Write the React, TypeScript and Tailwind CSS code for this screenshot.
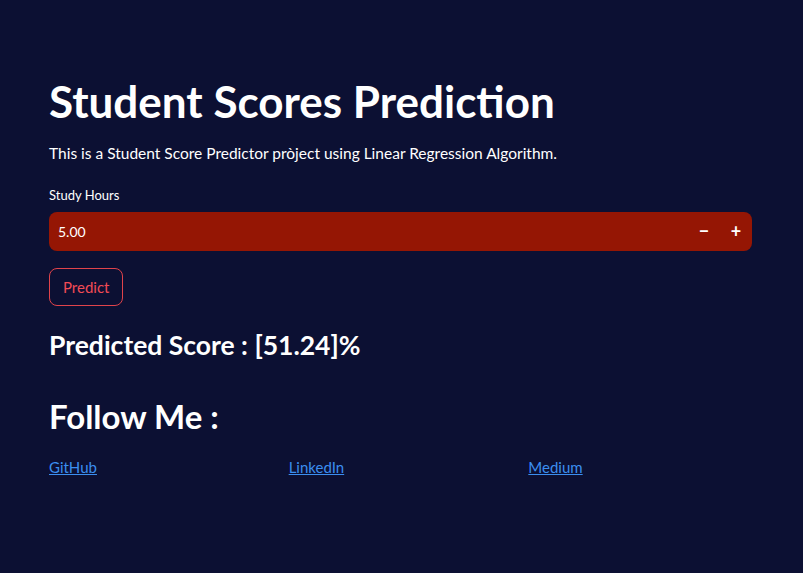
import { useState } from "react";

const FONT = { fontFamily: 'Lato, "Noto Sans", "Liberation Sans", sans-serif' };

export default function App() {
  const [hours, setHours] = useState(5);
  const [score] = useState("51.24");

  return (
    <div className="min-h-screen w-full bg-[#0c1033] text-white" style={FONT}>
      <div className="ml-[49px] w-[703px] pt-[75px] pb-10">
        <h1 className="text-[44px] font-bold leading-[1.2]">Student Scores Prediction</h1>
        <p className="mt-[13px] text-[15.5px] leading-6">
          This is a Student Score Predictor pròject using Linear Regression Algorithm.
        </p>

        <label className="mt-[20px] block text-[13px] leading-5">Study Hours</label>
        <div className="mt-[7px] flex h-[39px] items-center rounded-lg bg-[#951604] pl-[9px]">
          <span className="flex-1 text-[14px]">{hours.toFixed(2)}</span>
          <button
            type="button"
            onClick={() => setHours((h) => Math.max(0, h - 0.01))}
            className="flex h-[32px] w-[32px] items-center justify-center text-[18px] font-bold"
          >
            −
          </button>
          <button
            type="button"
            onClick={() => setHours((h) => h + 0.01)}
            className="flex h-[32px] w-[32px] items-center justify-center text-[18px] font-bold"
          >
            +
          </button>
        </div>

        <button
          type="button"
          className="mt-[17px] h-[38px] rounded-lg border border-[#e0434b] px-[13px] text-[15px] text-[#f24b55]"
        >
          Predict
        </button>

        <h3 className="mt-[21px] text-[26.5px] font-bold leading-[1.4]">Predicted Score : [{score}]%</h3>

        <h2 className="mt-[31px] text-[33px] font-bold leading-[1.3]">Follow Me :</h2>

        <div className="mt-[18px] grid grid-cols-3 gap-4 text-[15px]">
          <a href="#" className="text-[#3b8ef0] underline">GitHub</a>
          <a href="#" className="text-[#3b8ef0] underline">LinkedIn</a>
          <a href="#" className="text-[#3b8ef0] underline">Medium</a>
        </div>
      </div>
    </div>
  );
}
